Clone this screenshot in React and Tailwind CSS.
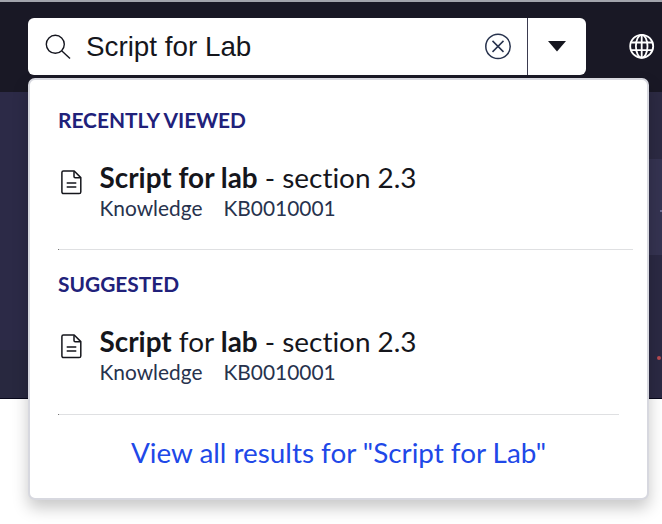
function SearchIcon() {
  return (
    <svg className="h-[26px] w-[26px] shrink-0" viewBox="0 0 26 26" fill="none" stroke="#15161f" strokeWidth="1.4">
      <circle cx="10.3" cy="10.3" r="9" />
      <path d="M16.9 16.9L25 24.6" />
    </svg>
  );
}

function ClearIcon() {
  return (
    <svg className="h-7 w-7" viewBox="0 0 28 28" fill="none" stroke="#27324d" strokeWidth="1.5">
      <circle cx="14" cy="13.4" r="12.2" />
      <path d="M8.5 7.9l11 11M19.5 7.9l-11 11" />
    </svg>
  );
}

function GlobeIcon() {
  return (
    <svg className="h-[26px] w-[26px]" viewBox="0 0 26 26" fill="none" stroke="#ffffff" strokeWidth="1.8">
      <circle cx="12.7" cy="13.3" r="11.5" />
      <ellipse cx="12.7" cy="13.3" rx="5.8" ry="11.5" />
      <path d="M12.7 1.8v23M2.2 9.5h21M2.2 17.1h21" />
    </svg>
  );
}

function DocumentIcon() {
  return (
    <svg className="mt-[9px] h-[25px] w-[21px] shrink-0" viewBox="0 0 21 25" fill="none" stroke="#15161c" strokeWidth="1.5" strokeLinejoin="round">
      <path d="M2.4 1H13.2L19.8 7.6V21.9a1.7 1.7 0 0 1-1.7 1.7H2.4A1.5 1.5 0 0 1 .9 22.1V2.5A1.5 1.5 0 0 1 2.4 1Z" />
      <path d="M13 1.2V6.6a1.2 1.2 0 0 0 1.2 1.2H19.6" />
      <path d="M5.7 13h9.6M5.7 17.1h9.6" />
    </svg>
  );
}

function Result({ children }) {
  return (
    <div className="flex h-[60px] pl-[3px]">
      <DocumentIcon />
      <div className="ml-[17.5px] whitespace-nowrap">
        <div className="pb-0.5 text-[27.9px] leading-8 text-[#15161c]">{children}</div>
        <div className="flex gap-[21px] text-[20.9px] leading-[26px] text-[#27324d]">
          <span>Knowledge</span>
          <span>KB0010001</span>
        </div>
      </div>
    </div>
  );
}

function Heading({ children }) {
  return <h2 className="text-[20.9px] leading-[26px] font-bold text-[#21217a]">{children}</h2>;
}

export default function App() {
  return (
    <div className="relative h-[524px] w-[662px] overflow-hidden bg-white font-['Lato',sans-serif] [font-variant-ligatures:none]">
      <header className="flex h-[92px] items-start border-t-2 border-[#a2a4ac] bg-[#191825] pt-4 pl-7">
        <div className="flex h-[57px] w-[558px] shrink-0 rounded-[6px] bg-white">
          <div className="flex flex-1 items-center pl-[17px] pr-[15px]">
            <SearchIcon />
            <span className="ml-[15px] flex-1 whitespace-nowrap font-['Liberation_Sans',sans-serif] text-[27.8px] leading-8 text-[#15161c]">Script for Lab</span>
            <ClearIcon />
          </div>
          <div className="flex w-[59px] items-center justify-center border-l border-[#3b3b50] pr-px">
            <svg className="h-[11px] w-[18px]" viewBox="0 0 18 11" fill="#15161f"><path d="M0 0h18L9 10.5Z" /></svg>
          </div>
        </div>
        <div className="mt-[15px] ml-[43px] shrink-0"><GlobeIcon /></div>
      </header>
      <div className="flex h-[307px] justify-between border-b border-[#08081b] bg-[#2b2945]">
        <div className="flex w-7 flex-col">
          <div className="h-[258px] bg-[#2c2a47]" />
          <div className="flex-1 bg-[#28283f]" />
        </div>
        <div className="flex w-[14px] flex-col">
          <div className="h-[67px] bg-[#2c2a43]" />
          <div className="h-24 bg-[#353351] pt-[51px] pl-3"><div className="size-0.5 rounded-full bg-[#8180a8]" /></div>
          <div className="flex-1 bg-[#2b2943] pt-[101px] pl-[9px]"><div className="size-1 rounded-full bg-[#b94b51]" /></div>
        </div>
      </div>

      <section className="absolute top-[78px] left-7 h-[422px] w-[621px] rounded-[7px] border-2 border-[#d7d8df] bg-white pt-[27px] pl-7 shadow-[0_8px_16px_rgba(0,0,0,0.22)]">
        <Heading>RECENTLY VIEWED</Heading>
        <div className="mt-7"><Result><b>Script for lab</b> - section 2.3</Result></div>
        <div className="mt-7 h-px w-[575px] bg-[#dfe0e2]"><div className="size-px bg-[#777]" /></div>
        <div className="mt-[21px]"><Heading>SUGGESTED</Heading></div>
        <div className="mt-7"><Result><b>Script</b> for <b>lab</b> - section 2.3</Result></div>
        <div className="mt-[29px] h-px w-[561px] bg-[#dfe0e2]"><div className="size-px bg-[#777]" /></div>
        <a className="mt-[21px] block w-[561px] text-center text-[27.85px] leading-[34px] whitespace-nowrap text-[#2048e8]">View all results for "Script for Lab"</a>
      </section>
    </div>
  );
}
